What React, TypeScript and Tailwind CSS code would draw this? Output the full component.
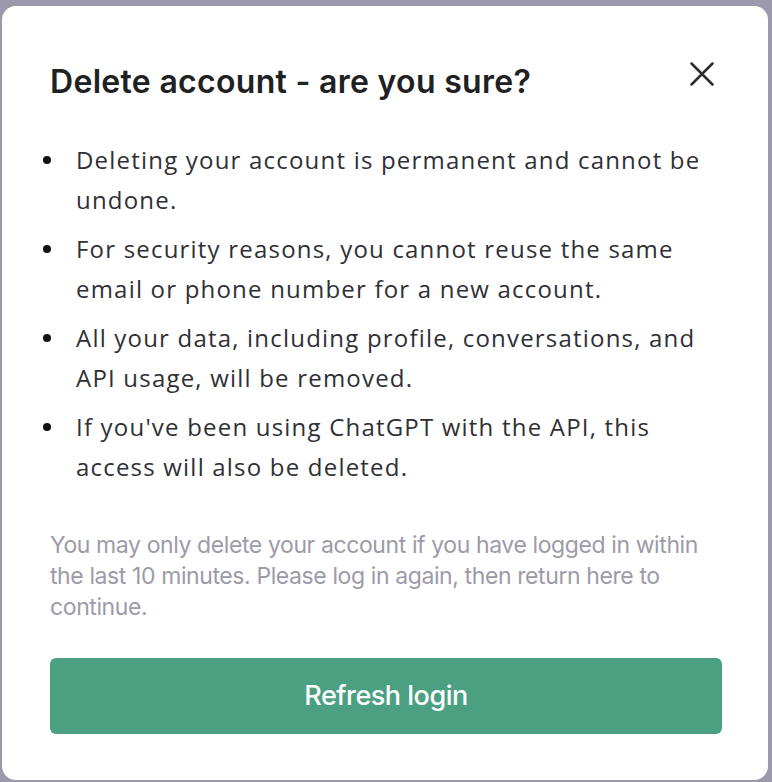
import React from 'react';

const points = [
  'Deleting your account is permanent and cannot be undone.',
  'For security reasons, you cannot reuse the same email or phone number for a new account.',
  'All your data, including profile, conversations, and API usage, will be removed.',
  "If you've been using ChatGPT with the API, this access will also be deleted.",
];

export default function App() {
  return (
    <div className="w-[772px] h-[782px] bg-[#9b99ab] pt-[6px] pl-[2px] pr-[4px] pb-[2px] font-['Inter',sans-serif]">
      <div className="h-full bg-white rounded-[14px] pl-[48px] pr-[46px] pt-[58px]">
        {/* header */}
        <div className="flex items-start justify-between">
          <h2 className="text-[32px] leading-[36px] font-semibold text-[#202123] tracking-[0.3px]">
            Delete account - are you sure?
          </h2>
          <svg
            viewBox="0 0 24 24"
            className="h-[24px] w-[24px] -mt-[2px] mr-[8px] text-[#2b2b30]"
            fill="none"
            stroke="currentColor"
            strokeWidth={2.5}
            strokeLinecap="round"
          >
            <path d="M1.5 1.5 22.5 22.5M22.5 1.5 1.5 22.5" />
          </svg>
        </div>

        {/* bullet list */}
        <ul className="mt-[40px] -ml-[7px] flex flex-col gap-[9px] text-[24px] leading-[40px] tracking-[1.2px] text-[#2f3036] font-['Open_Sans',sans-serif]">
          {points.map(p => (
            <li key={p} className="flex items-start">
              <span className="w-[33px] h-[40px] shrink-0 flex items-center">
                <span className="block w-[8px] h-[8px] rounded-full bg-[#111]" />
              </span>
              <span>{p}</span>
            </li>
          ))}
        </ul>

        <p className="mt-[43px] text-[23px] leading-[31px] text-[#9d9aa9] tracking-[-0.4px]">
          You may only delete your account if you have logged in within the last 10 minutes. Please log in again, then return here to continue.
        </p>

        <button className="mt-[35px] w-full h-[76px] rounded-[6px] bg-[#4aa081] text-white text-[27px] font-medium tracking-[-0.5px]">
          Refresh login
        </button>
      </div>
    </div>
  );
}
